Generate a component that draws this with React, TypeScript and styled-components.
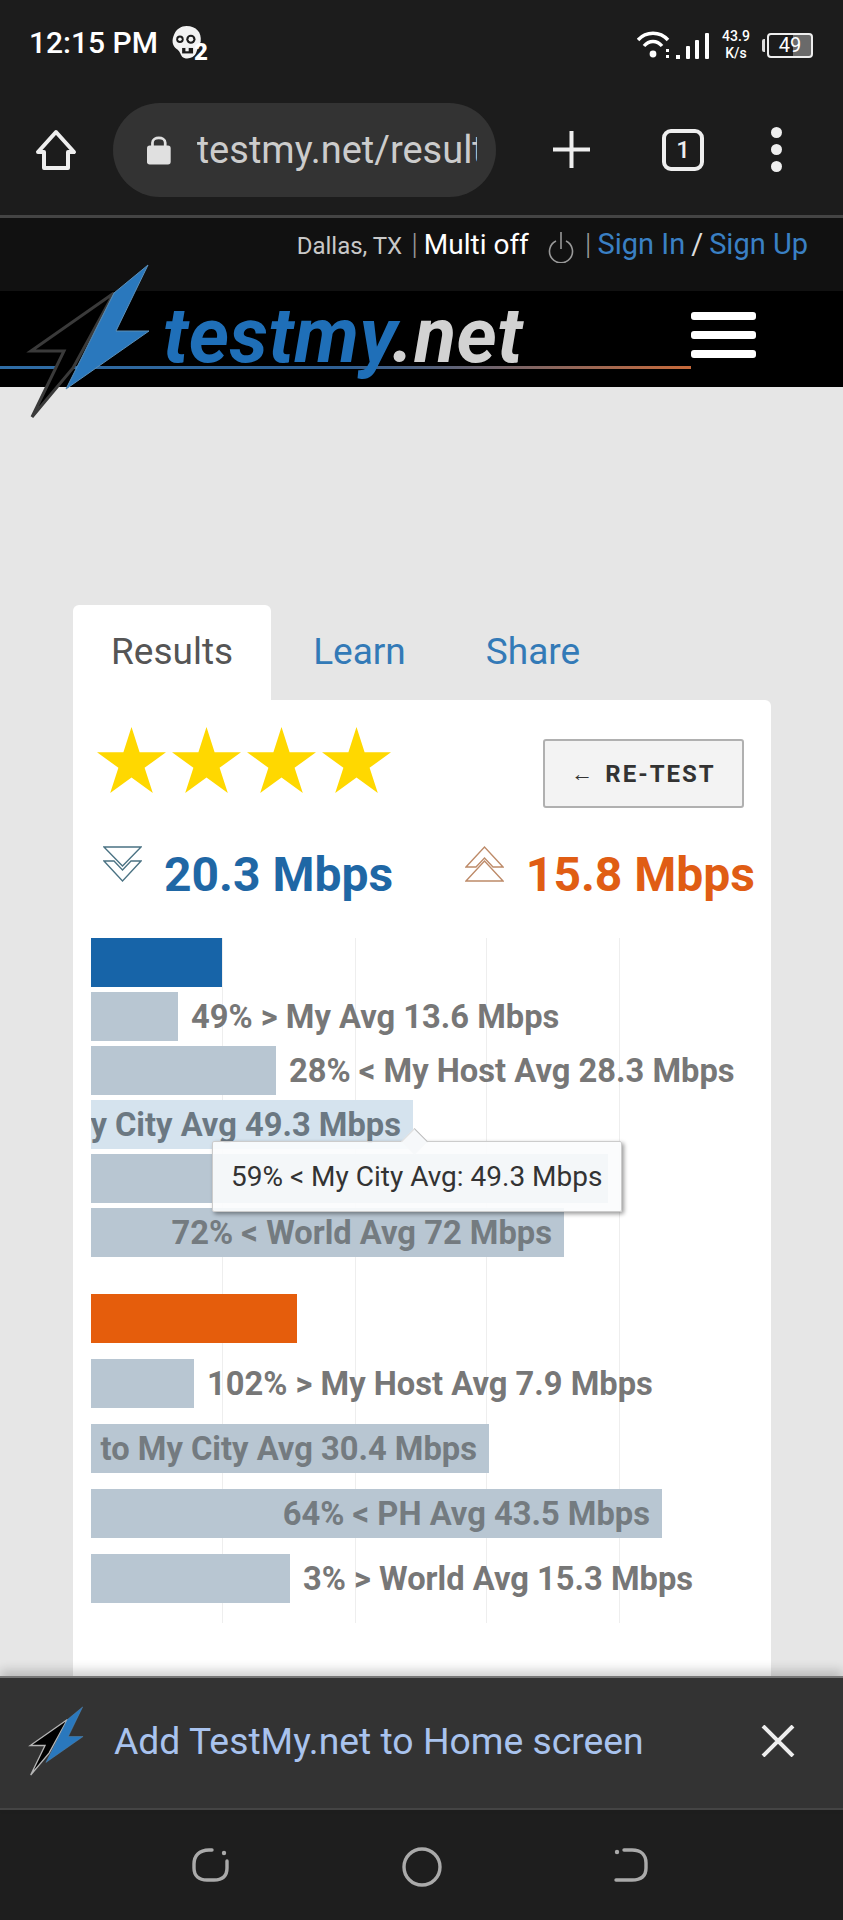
import { createGlobalStyle, styled } from "styled-components";

const GlobalStyle = createGlobalStyle`
  html, body {
    margin: 0;
    padding: 0;
    background: #e6e6e6;
    font-family: Roboto, "Liberation Sans", sans-serif;
  }
  * { box-sizing: border-box; }
`;

const downBars = [
  { width: 87, label: "49% > My Avg 13.6 Mbps" },
  { width: 185, label: "28% < My Host Avg 28.3 Mbps" },
  { width: 322, label: "59% < My City Avg 49.3 Mbps", inside: true, active: true },
  { width: 517, label: "", inside: true },
  { width: 473, label: "72% < World Avg 72 Mbps", inside: true },
];

const upBars = [
  { width: 103, label: "102% > My Host Avg 7.9 Mbps" },
  { width: 398, label: "to My City Avg 30.4 Mbps", inside: true },
  { width: 571, label: "64% < PH Avg 43.5 Mbps", inside: true },
  { width: 199, label: "3% > World Avg 15.3 Mbps" },
];

const Star = () => (
  <svg width="69" height="66" viewBox="0 0 69 66">
    <polygon points="34.5,0 42.6,25.2 69,25.2 47.6,40.8 55.8,66 34.5,50.4 13.2,66 21.4,40.8 0,25.2 26.4,25.2" fill="#ffd800" />
  </svg>
);

const Bolt = ({ w, h, outline }: { w: number; h: number; outline: string }) => (
  <svg width={w} height={h} viewBox="0 0 125 156">
    <polygon points="88,30 5,88 38,88 6,154 47,105" fill="#000" stroke={outline} strokeWidth="3" strokeLinejoin="miter" />
    <polygon points="122,2 90,68 123,68 40,126 88,30" fill="#2a78bd" stroke="#5b8fb8" strokeWidth="1" />
  </svg>
);

const App = () => {
  return (
    <Screen>
      <GlobalStyle />
      <StatusBar>
        <Clock>12:15 PM</Clock>
        <ZombieBadge>
          <svg width="31" height="35" viewBox="0 0 28 32">
            <path d="M14 1 C23 1 28 7 27 15 C26 19 24 21 23 25 C21 31 13 32 10 29 C8 26 8 24 5 22 C1 19 0 14 3 8 C5 4 9 1 14 1 Z" fill="#f2f2f2" />
            <circle cx="8" cy="13" r="3.4" fill="#1c1c1c" />
            <circle cx="8" cy="13" r="1.6" fill="#f2f2f2" />
            <circle cx="18" cy="13" r="4.2" fill="#1c1c1c" />
            <circle cx="18" cy="13" r="2.2" fill="#f2f2f2" />
            <rect x="10" y="21" width="10" height="5" fill="#1c1c1c" />
            <rect x="13" y="21" width="3" height="3" fill="#f2f2f2" />
          </svg>
          <BadgeNumber>2</BadgeNumber>
        </ZombieBadge>
        <StatusRight>
          <svg width="73" height="28" viewBox="0 0 73 28">
            <path d="M1 9 C9 0 23 0 31 9" fill="none" stroke="#fff" strokeWidth="3.4" />
            <path d="M7 15 C12 9 20 9 25 15" fill="none" stroke="#fff" strokeWidth="3.4" />
            <circle cx="16" cy="23" r="3.4" fill="#fff" />
            <rect x="29" y="18" width="3" height="3" fill="#fff" />
            <rect x="29" y="24" width="3" height="3" fill="#fff" />
            <rect x="39" y="24" width="4" height="4" fill="#fff" />
            <rect x="49" y="15" width="4" height="13" rx="1" fill="#fff" />
            <rect x="58" y="9" width="4" height="19" rx="1" fill="#fff" />
            <rect x="68" y="2" width="4" height="26" rx="1" fill="#fff" />
          </svg>
          <NetSpeed>
            <span>43.9</span>
            <span>K/s</span>
          </NetSpeed>
          <BatteryNub />
          <BatteryBody>49</BatteryBody>
        </StatusRight>
      </StatusBar>

      <Toolbar>
        <svg width="42" height="42" viewBox="0 0 42 42">
          <path d="M21 3 L39 23 H33 V39 H9 V23 H3 Z" fill="none" stroke="#eee" strokeWidth="4" strokeLinejoin="round" />
        </svg>
        <AddressPill>
          <svg width="26" height="33" viewBox="0 0 26 33">
            <path d="M6 13 V9 C6 2 20 2 20 9 V13" fill="none" stroke="#e0e0e0" strokeWidth="3" />
            <rect x="0" y="12" width="26" height="21" rx="3" fill="#e0e0e0" />
          </svg>
          <AddressText>testmy.net/results</AddressText>
        </AddressPill>
        <PlusButton>
          <svg width="37" height="37" viewBox="0 0 37 37">
            <path d="M18.5 0 V37 M0 18.5 H37" stroke="#eee" strokeWidth="4" />
          </svg>
        </PlusButton>
        <TabCount>1</TabCount>
        <MenuDots>
          <Dot />
          <Dot />
          <Dot />
        </MenuDots>
      </Toolbar>

      <TopStrip>
        <Location>Dallas, TX</Location>
        <Pipe>|</Pipe>
        <MultiText>Multi off</MultiText>
        <PowerIcon>
          <svg width="26" height="31" viewBox="0 0 26 31">
            <path d="M8 9 A11.5 11.5 0 1 0 18 9" fill="none" stroke="#999" strokeWidth="1.6" />
            <path d="M13 0 V17" stroke="#999" strokeWidth="1.6" />
          </svg>
        </PowerIcon>
        <Pipe>|</Pipe>
        <SignLink>Sign In</SignLink>
        <Slash>/</Slash>
        <SignLink>Sign Up</SignLink>
      </TopStrip>

      <LogoBand>
        <BoltSlot>
          <Bolt w={125} h={156} outline="#3a3a3a" />
        </BoltSlot>
        <LogoLine />
        <Wordmark>
          testmy<WordmarkEnd>.net</WordmarkEnd>
        </Wordmark>
        <Hamburger>
          <HamburgerBar />
          <HamburgerBar />
          <HamburgerBar />
        </Hamburger>
      </LogoBand>

      <Content>
        <Tabs>
          <Tab $active>Results</Tab>
          <Tab>Learn</Tab>
          <Tab>Share</Tab>
        </Tabs>
        <Panel>
          <RatingRow>
            <Stars>
              <Star />
              <Star />
              <Star />
              <Star />
            </Stars>
            <RetestButton>
              <RetestArrow>←</RetestArrow>RE-TEST
            </RetestButton>
          </RatingRow>

          <SpeedRow>
            <SpeedBlock>
              <svg width="39" height="36" viewBox="0 0 39 36">
                <path d="M1 1 H38 L19.5 20 Z M1 15 H11 L19.5 24 L28 15 H38 L19.5 35 Z" fill="none" stroke="#4a7283" strokeWidth="1.3" />
              </svg>
              <SpeedValue $color="#1f67a5">20.3 Mbps</SpeedValue>
            </SpeedBlock>
            <SpeedBlock>
              <svg width="39" height="36" viewBox="0 0 39 36">
                <path d="M1 35 H38 L19.5 15 Z M1 21 H11 L19.5 12 L28 21 H38 L19.5 1 Z" fill="none" stroke="#bd8a68" strokeWidth="1.3" />
              </svg>
              <SpeedValue $color="#e05d14">15.8 Mbps</SpeedValue>
            </SpeedBlock>
          </SpeedRow>

          <Chart>
            <GridLines>
              <GridLine $left={131} />
              <GridLine $left={264} />
              <GridLine $left={395} />
              <GridLine $left={528} />
            </GridLines>

            <BarGroup $gap={5}>
              <Bar $width={131} $color="#1764a8" />
              {downBars.map((b, i) => (
                <BarRow key={i}>
                  <Bar $width={b.width} $color={b.active ? "#d5e3ee" : "#b8c6d2"}>
                    {b.inside && <InsideLabel $active={b.active}>{b.label}</InsideLabel>}
                  </Bar>
                  {!b.inside && <OutsideLabel>{b.label}</OutsideLabel>}
                </BarRow>
              ))}
            </BarGroup>

            <BarGroup $gap={16}>
              <Bar $width={206} $color="#e55d0c" />
              {upBars.map((b, i) => (
                <BarRow key={i}>
                  <Bar $width={b.width} $color="#b8c6d2">
                    {b.inside && <InsideLabel>{b.label}</InsideLabel>}
                  </Bar>
                  {!b.inside && <OutsideLabel>{b.label}</OutsideLabel>}
                </BarRow>
              ))}
            </BarGroup>

            <Tooltip>59% &lt; My City Avg: 49.3 Mbps</Tooltip>
          </Chart>
        </Panel>
      </Content>

      <InstallBanner>
        <Bolt w={56} h={70} outline="#b5b5b5" />
        <InstallText>Add TestMy.net to Home screen</InstallText>
        <svg width="34" height="32" viewBox="0 0 34 32">
          <path d="M2 1 L32 31 M32 1 L2 31" stroke="#eee" strokeWidth="4" />
        </svg>
      </InstallBanner>

      <NavBar>
        <svg width="38" height="36" viewBox="0 0 38 36">
          <path d="M20 3 H17 C7 3 2 9 2 17 V21 C2 29 7 33 15 33 H22 C31 33 35 29 35 21 V14" fill="none" stroke="#aaa" strokeWidth="3.4" strokeLinecap="round" />
          <circle cx="32" cy="6" r="2.2" fill="#aaa" />
        </svg>
        <svg width="40" height="40" viewBox="0 0 40 40">
          <circle cx="20" cy="20" r="18" fill="none" stroke="#aaa" strokeWidth="3.4" />
        </svg>
        <svg width="34" height="36" viewBox="0 0 34 36">
          <path d="M10 3 H18 C27 3 32 8 32 16 V21 C32 29 27 33 18 33 H2" fill="none" stroke="#aaa" strokeWidth="3.4" strokeLinecap="round" />
          <circle cx="3" cy="5" r="2.2" fill="#aaa" />
        </svg>
      </NavBar>
    </Screen>
  );
};

export default App;

const Screen = styled.div`
  width: 843px;
  height: 1920px;
  display: flex;
  flex-direction: column;
  overflow: hidden;
  background: #e6e6e6;
`;

const StatusBar = styled.div`
  height: 84px;
  flex-shrink: 0;
  display: flex;
  align-items: flex-start;
  padding: 26px 30px 0 29px;
  background: #1c1c1c;
  color: #fff;
`;

const Clock = styled.div`
  font-size: 30px;
  line-height: 34px;
  font-weight: 500;
`;

const ZombieBadge = styled.div`
  display: flex;
  align-items: flex-end;
  margin: -1px 0 0 13px;
`;

const BadgeNumber = styled.span`
  font-size: 24px;
  line-height: 22px;
  font-weight: 900;
  margin-left: -8px;
  margin-bottom: -3px;
`;

const StatusRight = styled.div`
  display: flex;
  align-items: center;
  margin-left: auto;
  padding-top: 2px;
`;

const NetSpeed = styled.div`
  display: flex;
  flex-direction: column;
  align-items: center;
  width: 34px;
  margin-left: 9px;
  font-size: 14px;
  line-height: 17px;
  font-weight: 500;
`;

const BatteryNub = styled.div`
  width: 3px;
  height: 13px;
  margin-left: 9px;
  background: #ddd;
  border-radius: 2px 0 0 2px;
`;

const BatteryBody = styled.div`
  width: 46px;
  height: 25px;
  margin-left: 2px;
  border: 2px solid #eee;
  border-radius: 4px;
  font-size: 20px;
  line-height: 21px;
  text-align: center;
  background: linear-gradient(90deg, transparent 58%, #6a6a6a 58%);
`;

const Toolbar = styled.div`
  height: 134px;
  flex-shrink: 0;
  display: flex;
  align-items: center;
  padding: 0 0 0 35px;
  background: #1c1c1c;
  border-bottom: 3px solid #444;
`;

const AddressPill = styled.div`
  width: 383px;
  height: 94px;
  margin-left: 36px;
  display: flex;
  align-items: center;
  padding: 0 19px 0 34px;
  gap: 26px;
  border-radius: 47px;
  background: #333;
  overflow: hidden;
  flex-shrink: 0;
`;

const AddressText = styled.div`
  color: #ccc;
  font-size: 38px;
  line-height: 44px;
  white-space: nowrap;
  overflow: hidden;
`;

const PlusButton = styled.div`
  display: flex;
  margin-left: 57px;
`;

const TabCount = styled.div`
  width: 42px;
  height: 42px;
  margin-left: 72px;
  border: 4px solid #eee;
  border-radius: 9px;
  color: #eee;
  font-size: 24px;
  font-weight: 500;
  line-height: 34px;
  text-align: center;
`;

const MenuDots = styled.div`
  display: flex;
  flex-direction: column;
  gap: 6px;
  margin-left: 67px;
`;

const Dot = styled.div`
  width: 11px;
  height: 11px;
  border-radius: 50%;
  background: #eee;
`;

const TopStrip = styled.div`
  height: 73px;
  flex-shrink: 0;
  display: flex;
  align-items: baseline;
  justify-content: flex-end;
  padding: 8px 35px 0 0;
  background: #111;
  color: #ccc;
`;

const Location = styled.span`
  font-size: 24px;
  line-height: 36px;
  color: #c8c8c8;
  margin-right: 3px;
`;

const Pipe = styled.span`
  font-size: 30px;
  line-height: 36px;
  font-weight: 300;
  color: #999;
  margin: 0 6px;
`;

const MultiText = styled.span`
  font-size: 28px;
  line-height: 36px;
  color: #fff;
`;

const PowerIcon = styled.span`
  align-self: flex-start;
  display: flex;
  margin: 6px 5px 0 19px;
`;

const SignLink = styled.span`
  font-size: 29px;
  line-height: 36px;
  color: #3a80c4;
`;

const Slash = styled.span`
  font-size: 29px;
  line-height: 36px;
  color: #ddd;
  margin: 0 6px;
`;

const LogoBand = styled.div`
  position: relative;
  height: 96px;
  flex-shrink: 0;
  display: flex;
  align-items: flex-start;
  padding-left: 163px;
  background: #000;
`;

const BoltSlot = styled.div`
  position: absolute;
  left: 26px;
  top: -28px;
  z-index: 3;
  display: flex;
`;

const LogoLine = styled.div`
  position: absolute;
  left: 0;
  top: 75px;
  width: 691px;
  height: 3px;
  background: linear-gradient(90deg, #2f6da6 0%, #2f5f92 50%, #c86a3a 100%);
`;

const Wordmark = styled.div`
  position: relative;
  z-index: 1;
  margin-top: 5px;
  font-size: 77px;
  line-height: 80px;
  font-weight: 700;
  font-style: italic;
  letter-spacing: 0.5px;
  color: #1f6fb8;
  white-space: nowrap;
`;

const WordmarkEnd = styled.span`
  color: #d2d2d2;
`;

const Hamburger = styled.div`
  display: flex;
  flex-direction: column;
  gap: 11px;
  width: 65px;
  margin: 21px 87px 0 auto;
`;

const HamburgerBar = styled.div`
  height: 8px;
  border-radius: 3px;
  background: #fff;
`;

const Content = styled.div`
  height: 1289px;
  flex-shrink: 0;
  overflow: hidden;
  padding: 218px 72px 0 73px;
`;

const Tabs = styled.div`
  display: flex;
  gap: 4px;
  height: 95px;
`;

const Tab = styled.div<{ $active?: boolean }>`
  padding: 26px 38px 0;
  border-radius: 6px 6px 0 0;
  font-size: 37px;
  line-height: 42px;
  background: ${(p) => (p.$active ? "#fff" : "transparent")};
  color: ${(p) => (p.$active ? "#555" : "#337ab7")};
`;

const Panel = styled.div`
  height: 1000px;
  background: #fff;
  border-radius: 0 6px 0 0;
`;

const RatingRow = styled.div`
  display: flex;
  justify-content: space-between;
  align-items: flex-start;
  padding: 27px 27px 0 24px;
`;

const Stars = styled.div`
  display: flex;
  gap: 6px;
`;

const RetestButton = styled.div`
  width: 201px;
  height: 69px;
  margin-top: 12px;
  display: flex;
  align-items: center;
  justify-content: center;
  border: 2px solid #b0b0b0;
  border-radius: 3px;
  background: #f3f3f3;
  color: #333;
  font-size: 24px;
  font-weight: 700;
  letter-spacing: 2px;
`;

const RetestArrow = styled.span`
  font-size: 22px;
  margin-right: 10px;
`;

const SpeedRow = styled.div`
  display: flex;
  justify-content: space-between;
  padding: 38px 16px 0 30px;
`;

const SpeedBlock = styled.div`
  display: flex;
  align-items: flex-start;
  gap: 22px;
`;

const SpeedValue = styled.div<{ $color: string }>`
  margin-top: 2px;
  font-size: 48px;
  line-height: 54px;
  font-weight: 700;
  color: ${(p) => p.$color};
`;

const Chart = styled.div`
  position: relative;
  margin: 36px 0 0 18px;
  height: 685px;
`;

const GridLines = styled.div`
  position: absolute;
  inset: 0;
`;

const GridLine = styled.div<{ $left: number }>`
  position: absolute;
  top: 0;
  bottom: 0;
  left: ${(p) => p.$left}px;
  width: 1px;
  background: #eee;
`;

const BarGroup = styled.div<{ $gap: number }>`
  position: relative;
  display: flex;
  flex-direction: column;
  gap: ${(p) => p.$gap}px;
  margin-bottom: 37px;
`;

const BarRow = styled.div`
  display: flex;
  align-items: center;
  gap: 13px;
`;

const Bar = styled.div.attrs<{ $width: number; $color: string }>((p) => ({
  style: { width: p.$width },
}))<{ $width: number; $color: string }>`
  height: 49px;
  flex-shrink: 0;
  display: flex;
  align-items: center;
  justify-content: flex-end;
  padding-right: 12px;
  overflow: hidden;
  background: ${(p) => p.$color};
`;

const InsideLabel = styled.span<{ $active?: boolean }>`
  flex-shrink: 0;
  white-space: nowrap;
  font-size: 32.7px;
  font-weight: 700;
  color: ${(p) => (p.$active ? "#6b7882" : "#747b80")};
`;

const OutsideLabel = styled.span`
  white-space: nowrap;
  font-size: 32.7px;
  font-weight: 700;
  color: #777;
`;

const Tooltip = styled.div`
  position: absolute;
  left: 121px;
  top: 203px;
  width: 410px;
  height: 71px;
  padding-left: 18px;
  display: flex;
  align-items: center;
  border: 1px solid #ccc;
  border-radius: 2px;
  background: rgba(251, 252, 253, 0.9);
  box-shadow: 2px 2px 4px rgba(0, 0, 0, 0.4);
  color: #333;
  font-size: 28px;
  white-space: nowrap;

  &::before {
    content: "";
    position: absolute;
    left: 192px;
    top: -10px;
    width: 18px;
    height: 18px;
    transform: rotate(45deg);
    background: #f6f8fa;
    border-top: 1px solid #bbb;
    border-left: 1px solid #ddd;
  }
`;

const InstallBanner = styled.div`
  position: relative;
  z-index: 2;
  height: 134px;
  flex-shrink: 0;
  display: flex;
  align-items: center;
  padding: 0 48px 4px 28px;
  gap: 30px;
  background: #333;
  border-top: 2px solid #777;
  border-bottom: 2px solid #444;
  box-shadow: 0 -6px 10px rgba(0, 0, 0, 0.18);
`;

const InstallText = styled.div`
  flex: 1;
  color: #a9c3ee;
  font-size: 37.3px;
  line-height: 42px;
  white-space: nowrap;
`;

const NavBar = styled.div`
  flex: 1;
  display: flex;
  align-items: flex-start;
  justify-content: space-between;
  padding: 37px 195px 0 192px;
  background: #1e1e1e;
`;
